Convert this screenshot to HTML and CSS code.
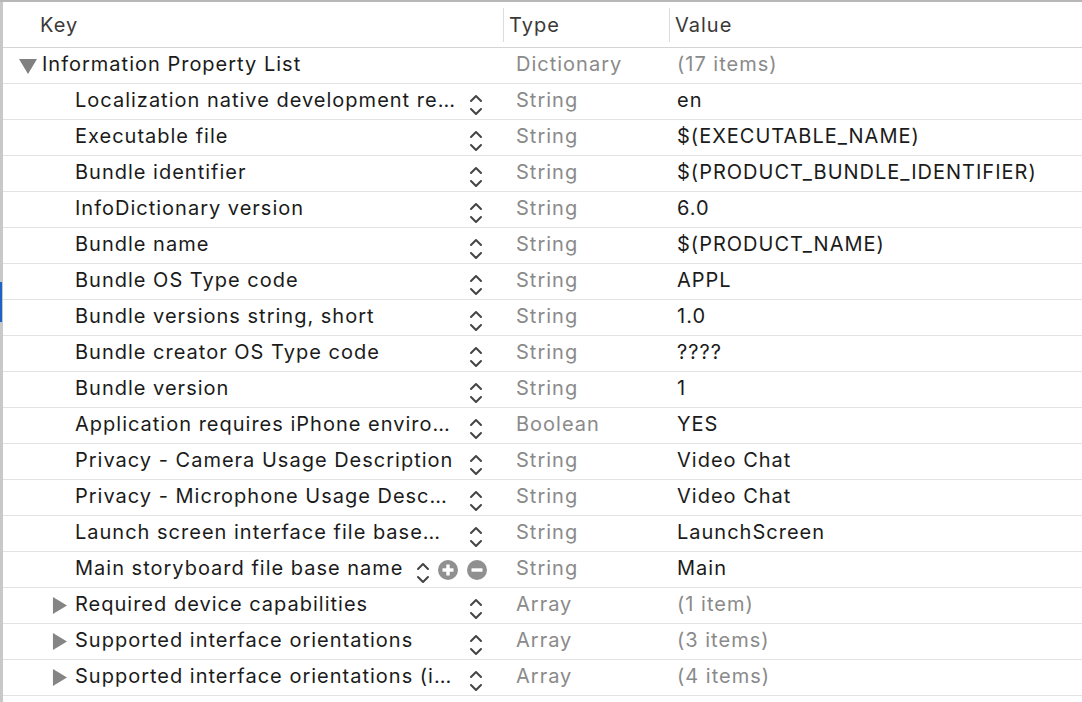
FILE: index.html
```html
<!DOCTYPE html>
<html>
<head>
<meta charset="utf-8">
<link rel="stylesheet" href="styles.css">
</head>
<body>
<div class="editor">
  <div class="gutter"><span class="gutter-mark"></span></div>
  <div class="plist">
    <div class="head">
      <div class="hcell hkey">Key</div>
      <div class="hcell htype">Type</div>
      <div class="hcell hvalue">Value</div>
    </div>

    <div class="row">
      <div class="key root"><span class="disc"><svg class="tri" viewBox="0 0 18 16"><polygon points="0,1 18,1 9,16"/></svg></span><span class="label">Information Property List</span></div>
      <div class="type">Dictionary</div>
      <div class="value muted">(17 items)</div>
    </div>

    <div class="row">
      <div class="key"><span class="label">Localization native development re…</span><svg class="stepper" viewBox="0 0 14 24"><polyline points="2,8 7,3 12,8"/><polyline points="2,16 7,21 12,16"/></svg></div>
      <div class="type">String</div>
      <div class="value">en</div>
    </div>
    <div class="row">
      <div class="key"><span class="label">Executable file</span><svg class="stepper" viewBox="0 0 14 24"><polyline points="2,8 7,3 12,8"/><polyline points="2,16 7,21 12,16"/></svg></div>
      <div class="type">String</div>
      <div class="value">$(EXECUTABLE_NAME)</div>
    </div>
    <div class="row">
      <div class="key"><span class="label">Bundle identifier</span><svg class="stepper" viewBox="0 0 14 24"><polyline points="2,8 7,3 12,8"/><polyline points="2,16 7,21 12,16"/></svg></div>
      <div class="type">String</div>
      <div class="value">$(PRODUCT_BUNDLE_IDENTIFIER)</div>
    </div>
    <div class="row">
      <div class="key"><span class="label">InfoDictionary version</span><svg class="stepper" viewBox="0 0 14 24"><polyline points="2,8 7,3 12,8"/><polyline points="2,16 7,21 12,16"/></svg></div>
      <div class="type">String</div>
      <div class="value">6.0</div>
    </div>
    <div class="row">
      <div class="key"><span class="label">Bundle name</span><svg class="stepper" viewBox="0 0 14 24"><polyline points="2,8 7,3 12,8"/><polyline points="2,16 7,21 12,16"/></svg></div>
      <div class="type">String</div>
      <div class="value">$(PRODUCT_NAME)</div>
    </div>
    <div class="row">
      <div class="key"><span class="label">Bundle OS Type code</span><svg class="stepper" viewBox="0 0 14 24"><polyline points="2,8 7,3 12,8"/><polyline points="2,16 7,21 12,16"/></svg></div>
      <div class="type">String</div>
      <div class="value">APPL</div>
    </div>
    <div class="row">
      <div class="key"><span class="label">Bundle versions string, short</span><svg class="stepper" viewBox="0 0 14 24"><polyline points="2,8 7,3 12,8"/><polyline points="2,16 7,21 12,16"/></svg></div>
      <div class="type">String</div>
      <div class="value">1.0</div>
    </div>
    <div class="row">
      <div class="key"><span class="label">Bundle creator OS Type code</span><svg class="stepper" viewBox="0 0 14 24"><polyline points="2,8 7,3 12,8"/><polyline points="2,16 7,21 12,16"/></svg></div>
      <div class="type">String</div>
      <div class="value">????</div>
    </div>
    <div class="row">
      <div class="key"><span class="label">Bundle version</span><svg class="stepper" viewBox="0 0 14 24"><polyline points="2,8 7,3 12,8"/><polyline points="2,16 7,21 12,16"/></svg></div>
      <div class="type">String</div>
      <div class="value">1</div>
    </div>
    <div class="row">
      <div class="key"><span class="label">Application requires iPhone enviro…</span><svg class="stepper" viewBox="0 0 14 24"><polyline points="2,8 7,3 12,8"/><polyline points="2,16 7,21 12,16"/></svg></div>
      <div class="type">Boolean</div>
      <div class="value">YES</div>
    </div>
    <div class="row">
      <div class="key"><span class="label">Privacy - Camera Usage Description</span><svg class="stepper" viewBox="0 0 14 24"><polyline points="2,8 7,3 12,8"/><polyline points="2,16 7,21 12,16"/></svg></div>
      <div class="type">String</div>
      <div class="value">Video Chat</div>
    </div>
    <div class="row">
      <div class="key"><span class="label">Privacy - Microphone Usage Desc…</span><svg class="stepper" viewBox="0 0 14 24"><polyline points="2,8 7,3 12,8"/><polyline points="2,16 7,21 12,16"/></svg></div>
      <div class="type">String</div>
      <div class="value">Video Chat</div>
    </div>
    <div class="row">
      <div class="key"><span class="label">Launch screen interface file base…</span><svg class="stepper" viewBox="0 0 14 24"><polyline points="2,8 7,3 12,8"/><polyline points="2,16 7,21 12,16"/></svg></div>
      <div class="type">String</div>
      <div class="value">LaunchScreen</div>
    </div>
    <div class="row">
      <div class="key"><span class="label">Main storyboard file base name</span><span class="controls"><svg class="stepper" viewBox="0 0 14 24"><polyline points="2,8 7,3 12,8"/><polyline points="2,16 7,21 12,16"/></svg><svg class="circ" viewBox="0 0 20 20"><circle cx="10" cy="10" r="10"/><rect x="4.5" y="8.3" width="11" height="3.4" class="w"/><rect x="8.3" y="4.5" width="3.4" height="11" class="w"/></svg><svg class="circ" viewBox="0 0 20 20"><circle cx="10" cy="10" r="10"/><rect x="4.5" y="8.3" width="11" height="3.4" class="w"/></svg></span></div>
      <div class="type">String</div>
      <div class="value">Main</div>
    </div>
    <div class="row">
      <div class="key sub"><span class="disc"><svg class="tri" viewBox="0 0 16 18"><polygon points="1,0 16,9 1,18"/></svg></span><span class="label">Required device capabilities</span><svg class="stepper" viewBox="0 0 14 24"><polyline points="2,8 7,3 12,8"/><polyline points="2,16 7,21 12,16"/></svg></div>
      <div class="type">Array</div>
      <div class="value muted">(1 item)</div>
    </div>
    <div class="row">
      <div class="key sub"><span class="disc"><svg class="tri" viewBox="0 0 16 18"><polygon points="1,0 16,9 1,18"/></svg></span><span class="label">Supported interface orientations</span><svg class="stepper" viewBox="0 0 14 24"><polyline points="2,8 7,3 12,8"/><polyline points="2,16 7,21 12,16"/></svg></div>
      <div class="type">Array</div>
      <div class="value muted">(3 items)</div>
    </div>
    <div class="row">
      <div class="key sub"><span class="disc"><svg class="tri" viewBox="0 0 16 18"><polygon points="1,0 16,9 1,18"/></svg></span><span class="label">Supported interface orientations (i…</span><svg class="stepper" viewBox="0 0 14 24"><polyline points="2,8 7,3 12,8"/><polyline points="2,16 7,21 12,16"/></svg></div>
      <div class="type">Array</div>
      <div class="value muted">(4 items)</div>
    </div>
  </div>
</div>
</body>
</html>
```
FILE: styles.css
```css
html, body {
  margin: 0;
  padding: 0;
  background: #ffffff;
}

body {
  font-family: Inter, "Liberation Sans", sans-serif;
  font-size: 20px;
  letter-spacing: 1px;
  color: #1b1b1b;
  width: 1082px;
  height: 702px;
  overflow: hidden;
}

.editor {
  display: flex;
  border-top: 2px solid #b7b7b7;
  height: 700px;
}

.gutter {
  width: 3px;
  flex: none;
  background: #c8c8c8;
  display: flex;
  flex-direction: column;
}

.gutter-mark {
  display: block;
  width: 2px;
  height: 40px;
  margin-top: 280px;
  background: #1c63c6;
}

.plist {
  flex: 1;
  display: flex;
  flex-direction: column;
}

.head {
  display: grid;
  grid-template-columns: 500px 166px 1fr;
  height: 45px;
  border-bottom: 1px solid #d4d4d4;
  align-items: center;
  color: #3b3937;
}

.hcell {
  height: 34px;
  display: flex;
  align-items: center;
}

.hkey {
  padding-left: 37px;
}

.htype,
.hvalue {
  border-left: 1px solid #dcdcdc;
  padding-left: 5px;
}

.row {
  display: grid;
  grid-template-columns: 500px 166px 1fr;
  height: 35px;
  border-bottom: 1px solid #e3e3e3;
  align-items: center;
}

.key {
  display: flex;
  align-items: center;
  padding-left: 72px;
  padding-right: 20px;
  height: 100%;
  min-width: 0;
}

.key.root {
  padding-left: 16px;
}

.key.sub {
  padding-left: 49px;
}

.disc {
  width: 23px;
  flex: none;
  display: flex;
  align-items: center;
}

.root .tri {
  width: 18px;
  height: 16px;
  fill: #808080;
  margin-top: 1px;
}

.sub .tri {
  width: 15px;
  height: 17px;
  fill: #858585;
}

.label {
  flex: 1;
  white-space: nowrap;
  overflow: hidden;
  margin-bottom: 3px;
}

.stepper {
  width: 14px;
  height: 24px;
  flex: none;
  margin-top: 6px;
  fill: none;
  stroke: #444444;
  stroke-width: 2;
  stroke-linecap: round;
  stroke-linejoin: round;
}

.controls {
  display: flex;
  align-items: center;
  margin-right: -4px;
  gap: 9px;
}

.controls .stepper {
  margin-right: -1px;
}

.circ {
  width: 20px;
  height: 20px;
  flex: none;
  fill: #909090;
  margin-top: 1px;
}

.circ .w {
  fill: #ffffff;
}

.type {
  padding-left: 13px;
  color: #8a8a8a;
  margin-bottom: 3px;
}

.value {
  padding-left: 8px;
  white-space: nowrap;
  margin-bottom: 3px;
}

.value.muted {
  color: #8a8a8a;
}
```
